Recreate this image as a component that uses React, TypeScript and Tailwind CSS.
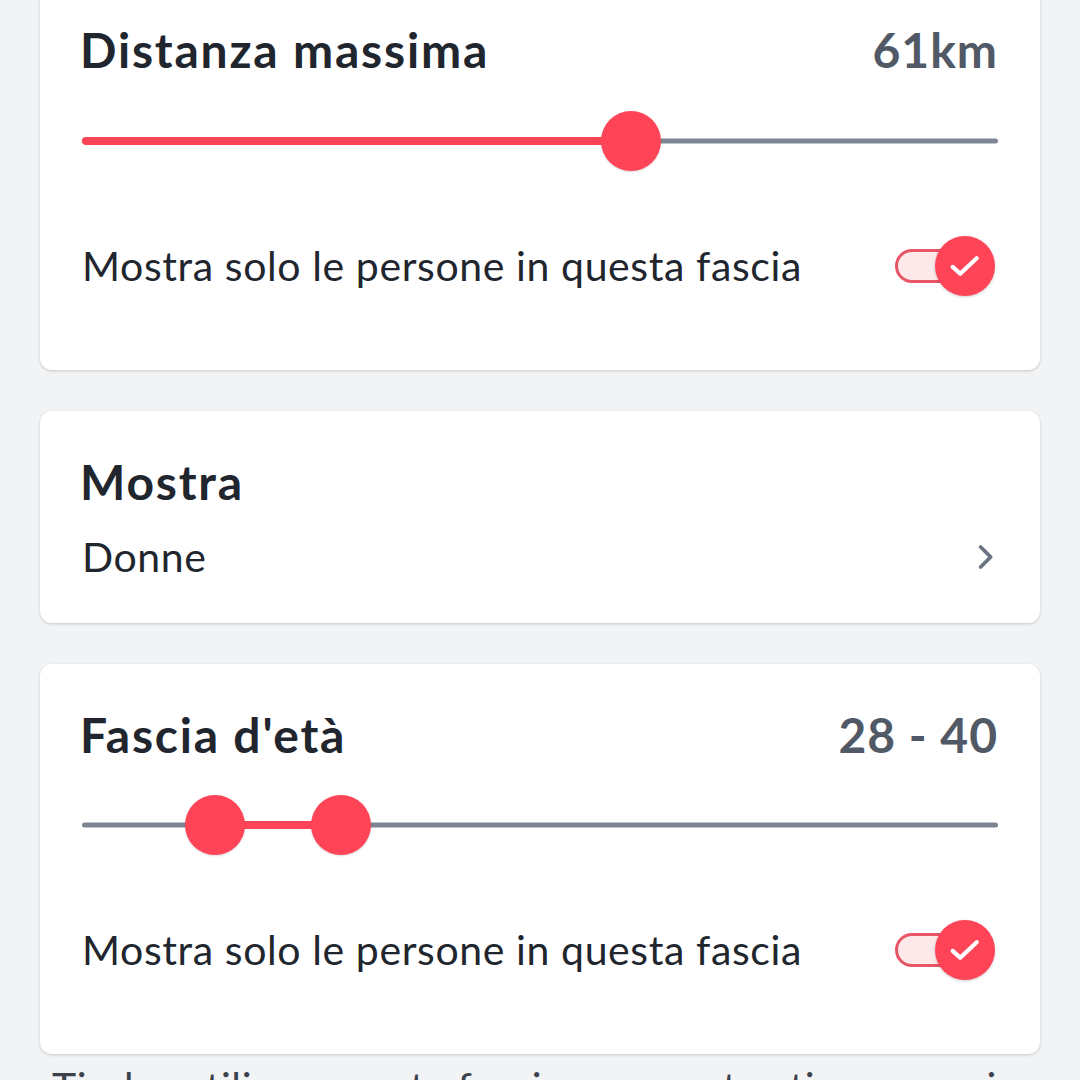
import React, { useState } from 'react';

// Single or range slider drawn from thumb positions (px within the track)
const Slider: React.FC<{ from?: number; to: number }> = ({ from, to }) => {
  const start = from ?? 0;
  return (
    <div className="relative h-[60px] w-full">
      <div className="absolute left-0 right-0 top-1/2 h-[5px] -translate-y-1/2 rounded-full bg-[#7c8591]" />
      <div
        className="absolute top-1/2 h-[8px] -translate-y-1/2 rounded-full bg-[#ff4458]"
        style={{ left: start, width: to - start }}
      />
      {from !== undefined && (
        <div
          className="absolute top-0 h-[60px] w-[60px] -translate-x-1/2 rounded-full bg-[#ff4458] shadow-[0_1px_2px_rgba(0,0,0,0.15)]"
          style={{ left: from }}
        />
      )}
      <div
        className="absolute top-0 h-[60px] w-[60px] -translate-x-1/2 rounded-full bg-[#ff4458] shadow-[0_1px_2px_rgba(0,0,0,0.15)]"
        style={{ left: to }}
      />
    </div>
  );
};

const Toggle: React.FC = () => {
  const [on, setOn] = useState(true);
  return (
    <button onClick={() => setOn(!on)} className="relative mr-[3px] h-[60px] w-[102px] shrink-0">
      <div className="absolute left-[2px] top-[13px] h-[34px] w-[70px] rounded-full border-[3px] border-[#e85566] bg-[#fde8ea]" />
      <div className="absolute right-0 top-0 flex h-[60px] w-[60px] items-center justify-center rounded-full bg-[#ff4458] shadow-[0_1px_3px_rgba(0,0,0,0.2)]">
        <svg width="36" height="36" viewBox="0 0 24 24" fill="none" stroke="white" strokeWidth="2.8" strokeLinecap="round" strokeLinejoin="round">
          <path d="M3.8 12.6l5 4.6 11-10.4" />
        </svg>
      </div>
    </button>
  );
};

const Card: React.FC<{ children: React.ReactNode; className?: string }> = ({ children, className }) => (
  <div className={`rounded-[12px] bg-white px-[42px] shadow-[0_1px_3px_rgba(0,0,0,0.18)] ${className ?? ''}`}>{children}</div>
);

const titleCls = 'text-[48px] font-bold leading-[60px] tracking-[1.8px]';
const bodyCls = 'text-[41px] leading-[60px] tracking-[0.6px]';

export default function App() {
  return (
    <div className="h-[1080px] w-[1080px] overflow-hidden bg-[#f2f3f5] px-[40px] text-[#21262e]" style={{ fontFamily: 'Lato, "Open Sans", sans-serif' }}>
      <Card className="-mt-[20px] pt-[40px] pb-[74px]">
        <div className="flex items-center justify-between">
          <h2 className={`${titleCls} -ml-[2px]`}>Distanza massima</h2>
          <span className="text-[48px] font-bold leading-[60px] tracking-[1px] text-[#505965]">61km</span>
        </div>
        <div className="mt-[31px]">
          <Slider to={549} />
        </div>
        <div className="mt-[65px] flex items-center justify-between">
          <span className={bodyCls}>Mostra solo le persone in questa fascia</span>
          <Toggle />
        </div>
      </Card>

      <Card className="mt-[41px] pt-[41px] pb-[36px]">
        <h2 className={`${titleCls} -ml-[2px]`}>Mostra</h2>
        <div className="mt-[15px] flex items-center justify-between">
          <span className={bodyCls}>Donne</span>
          <svg width="30" height="30" viewBox="0 0 24 24" fill="none" stroke="#6b7280" strokeWidth="3" strokeLinecap="round" strokeLinejoin="round" className="mr-[-2px]">
            <path d="M8.5 4l8 8-8 8" />
          </svg>
        </div>
      </Card>

      <Card className="mt-[41px] pt-[41px] pb-[74px]">
        <div className="flex items-center justify-between">
          <h2 className={`${titleCls} -ml-[2px]`}>Fascia d'età</h2>
          <span className="text-[48px] font-bold leading-[60px] tracking-[1px] text-[#505965]">28 - 40</span>
        </div>
        <div className="mt-[30px]">
          <Slider from={133} to={259} />
        </div>
        <div className="mt-[65px] flex items-center justify-between">
          <span className={bodyCls}>Mostra solo le persone in questa fascia</span>
          <Toggle />
        </div>
      </Card>

      <p className={`mt-[3px] px-[12px] ${bodyCls} text-[#3c424d]`}>
        Tinder utilizza questa fascia per mostrarti persone in linea con le tue preferenze.
      </p>
    </div>
  );
}
